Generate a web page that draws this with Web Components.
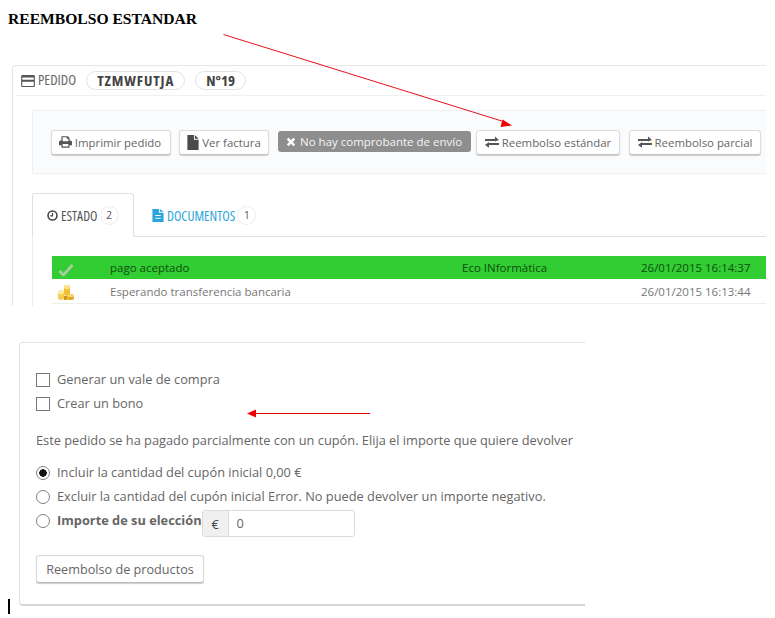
<!DOCTYPE html>
<html lang="es">
<head>
<meta charset="utf-8">
<title>Reembolso estandar</title>
<style>
  html, body { margin: 0; background: #fff; }
  body { width: 775px; height: 618px; overflow: hidden; font-family: "Open Sans", sans-serif; }
</style>
</head>
<body>
<page-title>REEMBOLSO ESTANDAR</page-title>

<order-panel>
  <action-button slot="actions" icon="print" style="width:120px;padding-right:2px">Imprimir pedido</action-button>
  <action-button slot="actions" icon="file" style="width:90px;margin-left:8px">Ver factura</action-button>
  <shipping-badge slot="actions" style="margin-left:9px">No hay comprobante de envío</shipping-badge>
  <action-button slot="actions" icon="exchange" style="width:144px;margin-left:5px">Reembolso estándar</action-button>
  <action-button slot="actions" icon="exchange" style="width:132px;margin-left:9px">Reembolso parcial</action-button>

  <history-row slot="history" accepted icon="check" employee="Eco INformàtica" date="26/01/2015 16:14:37">pago aceptado</history-row>
  <history-row slot="history" icon="coins" date="26/01/2015 16:13:44">Esperando transferencia bancaria</history-row>
</order-panel>

<refund-panel></refund-panel>

<note-arrows></note-arrows>

<script>
  const ICONS = {
    print: '<svg viewBox="0 0 16 14" width="13" height="12"><path fill="#555" d="M3 0h8l2 2v3h1.2c.8 0 1.8 1 1.8 1.800V11h-3v3H3v-3H0V6.800C0 6 1 5 1.800 5H3zM4.500 1.300V6h7V3h-2V1.300zM4.500 9.500v3h7v-3z"/></svg>',
    file: '<svg viewBox="0 0 12 16" width="12" height="15"><path fill="#4a4a4a" d="M0 0h7v5h5v11H0zM8 0l4 4H8z"/></svg>',
    exchange: '<svg viewBox="0 0 14 12" width="14" height="12"><path fill="#555" d="M0 3h10V.6L14 4 10 5.400V5H0zM14 7H4V6L0 9l4 2.800V9h10z"/></svg>',
    check: '<svg viewBox="0 0 16 14" width="16" height="14" style="margin-top:5px"><path fill="none" stroke="#7cc678" stroke-width="3.500" d="M1.500 8l4 4L14.500 2"/><path fill="none" stroke="#b4deae" stroke-width="1.200" d="M1.500 8l4 4L14.500 2"/></svg>',
    coins: '<svg viewBox="0 0 16 15" width="16" height="15" style="margin-top:3px"><rect x="6" y="0" width="6" height="11" rx="2.500" fill="#f0bf35"/><ellipse cx="9" cy="2" rx="3" ry="2" fill="#fbe58a"/><rect x="0" y="5" width="6" height="10" rx="2.500" fill="#f6cf55"/><ellipse cx="3" cy="7" rx="3" ry="2" fill="#fdeea6"/><rect x="9" y="9" width="7" height="6" rx="2.500" fill="#e3a81e"/><ellipse cx="12.500" cy="10.500" rx="3.500" ry="1.500" fill="#f8d968"/><rect x="6" y="11" width="3" height="4" fill="#c99a1c"/></svg>'
  }

  class PageTitle extends HTMLElement {
    constructor () {
      super()
      this.attachShadow({ mode: 'open' }).innerHTML = `
      <style>
        :host{
          display: block;
          height: 65px;
          box-sizing: border-box;
          padding: 10px 0 0 8px;
          font: bold 15.600px/17px "Liberation Serif", serif;
          color: #000;
        }
      </style>
      <slot></slot>`
    }
  }

  class ActionButton extends HTMLElement {
    constructor () {
      super()
      this.attachShadow({ mode: 'open' })
    }

    connectedCallback () {
      this.shadowRoot.innerHTML = `
      <style>
        :host{
          display: flex;
          align-items: center;
          justify-content: center;
          gap: 3px;
          box-sizing: border-box;
          height: 25px;
          background: #fff;
          border: 1px solid #dcdcdc;
          border-bottom-color: #c4c4c4;
          border-radius: 3px;
          box-shadow: 0 1px 1px #ccc;
          font: 11.400px "Open Sans", sans-serif;
          color: #666;
          white-space: nowrap;
        }
        svg{ display: block; }
      </style>
      ${ICONS[this.getAttribute('icon')] || ''}<slot></slot>`
    }
  }

  class ShippingBadge extends HTMLElement {
    constructor () {
      super()
      this.attachShadow({ mode: 'open' }).innerHTML = `
      <style>
        :host{
          display: flex;
          align-items: center;
          gap: 4px;
          box-sizing: border-box;
          width: 193px;
          height: 21px;
          margin-top: -1px;
          padding-left: 8px;
          background: #8e8e8e;
          border-radius: 3px;
          font: 11.500px "Open Sans", sans-serif;
          color: #f4f4f4;
          white-space: nowrap;
        }
        svg{ display: block; }
      </style>
      <svg viewBox="0 0 12 12" width="10" height="10"><path fill="none" stroke="#fff" stroke-width="3" d="M2 2l8 8M10 2l-8 8"/></svg>
      <slot></slot>`
    }
  }

  class HistoryRow extends HTMLElement {
    constructor () {
      super()
      this.attachShadow({ mode: 'open' })
    }

    connectedCallback () {
      this.shadowRoot.innerHTML = `
      <style>
        :host{
          display: grid;
          grid-template-columns: 58px 352px 179px 1fr;
          align-items: center;
          height: 23px;
          font: 11.500px "Open Sans", sans-serif;
          color: #777;
          white-space: nowrap;
        }
        :host([accepted]){
          background: #32cd32;
          color: #0f4d0f;
        }
        :host(:not([accepted])){
          height: 25px;
          border-bottom: 1px solid #eee;
          box-sizing: border-box;
        }
        .icon{ display: flex; align-items: center; padding-left: 6px; height: 18px; }
      </style>
      <div class="icon">${ICONS[this.getAttribute('icon')]}</div>
      <div><slot></slot></div>
      <div>${this.getAttribute('employee') || ''}</div>
      <div>${this.getAttribute('date')}</div>`
    }
  }

  class OrderPanel extends HTMLElement {
    constructor () {
      super()
      this.attachShadow({ mode: 'open' }).innerHTML = `
      <style>
        :host{
          display: block;
          box-sizing: border-box;
          width: 754px;
          height: 241px;
          margin-left: 12px;
          padding-left: 19px;
          border: 1px solid #e6e6e6;
          border-width: 1px 0 0 1px;
          border-top-left-radius: 4px;
          overflow: hidden;
        }
        .head{
          display: flex;
          align-items: center;
          height: 29px;
          margin-left: -15px;
          padding-left: 4px;
          border-bottom: 1px solid #efefef;
          font: 14.500px/1 "Open Sans", sans-serif;
          font-stretch: 75%;
          color: #666;
        }
        .head svg{ margin-right: 3px; }
        .tag{
          margin-left: 10px;
          padding: 0 10px;
          height: 17px;
          line-height: 17px;
          border: 1px solid #e2e2e2;
          border-radius: 10px;
          font-size: 15px;
          font-weight: bold;
          letter-spacing: .9px;
          color: #444;
        }
        .tag + .tag{ margin-left: 10px; padding: 0 10px; letter-spacing: 0; }
        .well{
          display: flex;
          align-items: center;
          box-sizing: border-box;
          height: 64px;
          margin-top: 14px;
          padding-left: 18px;
          background: #fafbfd;
          border: 1px solid #eef0f2;
          border-right: 0;
        }
        .tabs{
          display: flex;
          height: 44px;
          margin-top: 19px;
          border-bottom: 1px solid #e0e0e0;
          box-sizing: border-box;
          font: 13.600px "Open Sans", sans-serif;
          font-stretch: 75%;
        }
        .tab{
          display: flex;
          align-items: center;
          height: 44px;
          box-sizing: border-box;
        }
        .tab.active{
          width: 102px;
          padding-left: 14px;
          background: #fff;
          border: 1px solid #e0e0e0;
          border-bottom: 1px solid #fff;
          border-radius: 3px 3px 0 0;
          color: #555;
        }
        .tab.other{
          margin-left: 18px;
          color: #2aa5dc;
        }
        .tab svg{ margin-right: 3px; }
        .count{
          flex: none;
          width: 17px;
          height: 17px;
          margin-left: 2px;
          text-align: center;
          border: 1px solid #ececec;
          border-radius: 50%;
          color: #555;
          font: 10px/17px "Open Sans", sans-serif;
        }
        .history{
          height: 69px;
          padding: 19px 0 0 19px;
          border-left: 1px solid #ebebeb;
        }
      </style>
      <div class="head">
        <svg viewBox="0 0 16 14" width="14" height="12"><path fill="#555" d="M1.500 0h13c.8 0 1.500.7 1.500 1.500v11c0 .8-.7 1.500-1.500 1.500h-13C.7 14 0 13.300 0 12.500v-11C0 .7.7 0 1.500 0zM1.300 3v2.500h13.400V3zM1.300 8v4.700h13.400V8z"/></svg>
        <span class="label">PEDIDO</span>
        <span class="tag">TZMWFUTJA</span>
        <span class="tag">N°19</span>
      </div>
      <div class="well"><slot name="actions"></slot></div>
      <div class="tabs">
        <div class="tab active">
          <svg viewBox="0 0 14 14" width="11" height="11"><circle cx="7" cy="7" r="5.700" fill="none" stroke="#444" stroke-width="2"/><path fill="none" stroke="#444" stroke-width="1.500" d="M7 3.500V7.500H4"/></svg>
          ESTADO <span class="count">2</span>
        </div>
        <div class="tab other">
          <svg viewBox="0 0 12 14" width="12" height="13"><path fill="#2aa5dc" d="M0 0h7v4h5v10H0zM8 0l4 3H8z"/><path stroke="#fff" d="M3 7h6M3 10h6"/></svg>
          DOCUMENTOS <span class="count">1</span>
        </div>
      </div>
      <div class="history"><slot name="history"></slot></div>`
    }
  }

  class RefundPanel extends HTMLElement {
    constructor () {
      super()
      this.attachShadow({ mode: 'open' }).innerHTML = `
      <style>
        :host{
          display: flex;
          align-items: flex-end;
          margin: 36px 0 0 8px;
        }
        .caret{
          width: 2px;
          height: 15px;
          margin: 0 9px -8px 0;
          background: #000;
        }
        .panel{
          box-sizing: border-box;
          width: 566px;
          height: 264px;
          padding: 24px 0 0 16px;
          background: #fff;
          border: 1px solid #e2e2e2;
          border-right: 0;
          border-bottom: 2px solid #d8d8d8;
          border-radius: 4px 0 0 4px;
          font: 12.800px "Open Sans", sans-serif;
          color: #666;
        }
        .line{
          display: flex;
          align-items: center;
          gap: 7px;
          height: 24px;
          white-space: nowrap;
        }
        .box{
          flex: none;
          width: 14px;
          height: 14px;
          box-sizing: border-box;
          border: 1px solid #777;
          margin-top: 2px;
        }
        .radio{
          flex: none;
          width: 14px;
          height: 14px;
          box-sizing: border-box;
          border: 1.500px solid #808080;
          border-radius: 50%;
          margin-top: 2px;
        }
        .radio.on{
          background: radial-gradient(circle, #111 0 3.500px, #fff 4px);
        }
        .note{ margin-top: 13px; }
        .first{ margin-top: 8px; }
        .input-group{
          display: flex;
          box-sizing: border-box;
          width: 153px;
          height: 27px;
          margin: 6px 0 0 -7px;
          border: 1px solid #dcdcdc;
          border-radius: 3px;
        }
        .addon{
          width: 25px;
          background: #f0f0f0;
          border-right: 1px solid #dcdcdc;
          text-align: center;
          line-height: 26px;
          color: #444;
        }
        .value{ padding-left: 8px; line-height: 25px; }
        button{
          display: block;
          box-sizing: border-box;
          width: 168px;
          height: 28px;
          margin-top: 23px;
          padding: 0;
          background: #fff;
          border: 1px solid #d8d8d8;
          border-bottom-color: #bbb;
          border-radius: 3px;
          box-shadow: 0 1px 1px #ccc;
          font: 12.660px "Open Sans", sans-serif;
          color: #666;
        }
      </style>
      <div class="caret"></div>
      <div class="panel">
        <div class="line"><span class="box"></span>Generar un vale de compra</div>
        <div class="line"><span class="box"></span>Crear un bono</div>
        <div class="line note">Este pedido se ha pagado parcialmente con un cupón. Elija el importe que quiere devolver</div>
        <div class="line first"><span class="radio on"></span>Incluir la cantidad del cupón inicial 0,00 €</div>
        <div class="line"><span class="radio"></span>Excluir la cantidad del cupón inicial Error. No puede devolver un importe negativo.</div>
        <div class="line"><span class="radio"></span><b>Importe de su elección</b>
          <div class="input-group"><div class="addon">€</div><div class="value">0</div></div>
        </div>
        <button>Reembolso de productos</button>
      </div>`
    }
  }

  class NoteArrows extends HTMLElement {
    constructor () {
      super()
      this.attachShadow({ mode: 'open' }).innerHTML = `
      <style>
        :host{
          position: absolute;
          top: 0;
          left: 0;
          width: 775px;
          height: 618px;
          pointer-events: none;
        }
      </style>
      <svg width="775" height="618" viewBox="0 0 775 618">
        <path fill="none" stroke="#e8101c" d="M223.500 34.500L505 122"/>
        <path fill="#f00000" d="M512 125.500L502.500 119.500L500.500 127z"/>
        <path fill="none" stroke="#e00000" d="M252 413.500H370"/>
        <path fill="#f00000" d="M247 413.500L256 409.500V417.500z"/>
      </svg>`
    }
  }

  customElements.define('page-title', PageTitle)
  customElements.define('action-button', ActionButton)
  customElements.define('shipping-badge', ShippingBadge)
  customElements.define('history-row', HistoryRow)
  customElements.define('order-panel', OrderPanel)
  customElements.define('refund-panel', RefundPanel)
  customElements.define('note-arrows', NoteArrows)
</script>
</body>
</html>
